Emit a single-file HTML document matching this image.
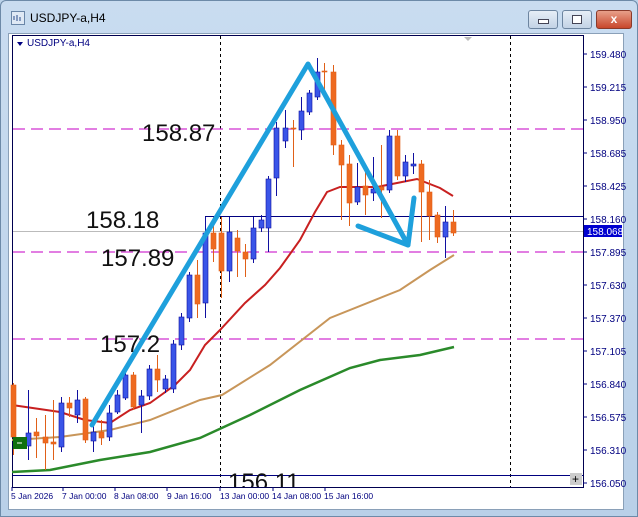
<!DOCTYPE html>
<html><head><meta charset="utf-8"><style>
body{margin:0;width:638px;height:517px;overflow:hidden;background:#bcd3ea;font-family:"Liberation Sans",sans-serif}
.frame{position:absolute;left:0;top:0;width:636px;height:515px;border:1px solid #6d8aa8;background:linear-gradient(#c9dcf0,#b9d0e8);border-radius:6px 6px 0 0}
.title{position:absolute;left:30px;top:11px;font-size:12px;color:#000}
.btn{position:absolute;top:10px;height:17px;border:1px solid #6d85a0;border-radius:3px;background:linear-gradient(#e6eef7,#c3d3e6)}
.inner{position:absolute;left:8px;top:33px;width:614px;height:475px;background:#fff;border:1px solid #8aa0b8}
</style></head><body>
<div class="frame"></div>
<svg style="position:absolute;left:11px;top:11px" width="14" height="14"><rect x="0.5" y="0.5" width="13" height="13" fill="#dfe9f5" stroke="#6a86a8"/><path d="M3 5v4M6 4v6M9 6v4" stroke="#2a4a8a"/></svg>
<div class="title">USDJPY-a,H4</div>
<div class="btn" style="left:528px;width:28px"><div style="position:absolute;left:9px;top:8px;width:9px;height:3px;border:1px solid #445;background:#fff"></div></div>
<div class="btn" style="left:562px;width:28px"><div style="position:absolute;left:9px;top:4px;width:8px;height:7px;border:1px solid #445;background:#fff"></div></div>
<div class="btn" style="left:596px;width:34px;background:linear-gradient(#e8a08a,#c8472c);border-color:#8a3a2a;color:#fff;font-weight:bold;font-size:12px;text-align:center;line-height:17px">x</div>
<div class="inner"></div>
<svg style="position:absolute;left:0;top:0" width="638" height="517" font-family="Liberation Sans, sans-serif">
<rect x="12.5" y="35.5" width="571" height="452" fill="none" stroke="#000050"/>
<g stroke="#000" stroke-dasharray="3,3"><line x1="220.5" y1="36" x2="220.5" y2="487"/><line x1="510.5" y1="36" x2="510.5" y2="487"/></g>
<path d="M464 37l4 4l4-4z" fill="#bbb"/>
<g stroke="#d030d0" stroke-width="1.3" stroke-dasharray="12,6"><line x1="13" y1="129" x2="583" y2="129"/><line x1="13" y1="252" x2="583" y2="252"/><line x1="13" y1="339" x2="583" y2="339"/></g>
<line x1="13" y1="231.5" x2="583" y2="231.5" stroke="#bbb"/>
<path d="M205.5 232V216.5H583" fill="none" stroke="#000080"/>
<line x1="13" y1="475.5" x2="583" y2="475.5" stroke="#000080"/>
<polyline fill="none" stroke="#2a8a2a" stroke-width="2.5" points="12,472 50,470 100,460 150,452 200,438 250,415 300,390 350,368 380,360 420,355 454,347"/>
<polyline fill="none" stroke="#c8965a" stroke-width="2" points="12,440 60,437 110,430 150,420 200,400 222,395 270,365 330,318 400,290 430,270 454,255"/>
<polyline fill="none" stroke="#c82020" stroke-width="2" points="12,405 60,412 85,420 110,423 130,410 150,403 175,385 190,370 205,345 220,330 245,303 265,285 280,268 300,240 315,212 327,192 340,187 377,187 417,179 440,188 453,196"/>
<g id="c"></g>
<rect x="13" y="437" width="14" height="12" fill="#107010"/><line x1="17" y1="443" x2="22" y2="443" stroke="#fff"/>
<g stroke="#1ea0dc" stroke-width="5" fill="none" stroke-linecap="round" stroke-linejoin="round"><polyline points="92,425 308,64 408,245 414,198"/><line x1="358" y1="226" x2="408" y2="245"/></g>
<g font-size="24" fill="#111"><text x="142" y="141">158.87</text><text x="86" y="228">158.18</text><text x="101" y="266">157.89</text><text x="100" y="352">157.2</text></g>
<svg x="0" y="0" width="583" height="487"><text x="228" y="490" font-size="24" fill="#111">156.11</text></svg>
<rect x="570" y="473" width="12" height="12" fill="#ccc"/><text x="572" y="483" font-size="12">+</text>
<g font-size="10" fill="#000080"><text x="590" y="58">159.480</text><text x="590" y="91">159.215</text><text x="590" y="124">158.950</text><text x="590" y="157">158.685</text><text x="590" y="190">158.425</text><text x="590" y="223">158.160</text><text x="590" y="256">157.895</text><text x="590" y="289">157.630</text><text x="590" y="322">157.370</text><text x="590" y="355">157.105</text><text x="590" y="388">156.840</text><text x="590" y="421">156.575</text><text x="590" y="454">156.310</text><text x="590" y="487">156.050</text></g>
<rect x="584" y="225" width="38" height="12" fill="#0000d0"/><text x="587" y="235" font-size="10" fill="#fff">158.068</text>
<g stroke="#000080"><path d="M583 54h4M583 87h4M583 120h4M583 153h4M583 186h4M583 219h4M583 252h4M583 285h4M583 318h4M583 351h4M583 384h4M583 417h4M583 450h4M583 483h4M12 487v4M63 487v4M115 487v4M167 487v4M220 487v4M273 487v4M325 487v4"/></g>
<g font-size="8.5" fill="#000080"><text x="11" y="499">5 Jan 2026</text><text x="62" y="499">7 Jan 00:00</text><text x="114" y="499">8 Jan 08:00</text><text x="167" y="499">9 Jan 16:00</text><text x="220" y="499">13 Jan 00:00</text><text x="272" y="499">14 Jan 08:00</text><text x="324" y="499">15 Jan 16:00</text></g>
<path d="M17 42l3 4l3-4z" fill="#000080"/><text x="27" y="46" font-size="10" fill="#000080">USDJPY-a,H4</text>
</svg>
<script>
var d=[[13,385,437,383,455,0],[28,446,433,390,460,1],[36,432,436,418,458,0],[45,437,443,415,470,0],[53,442,444,400,460,0],[61,447,403,397,452,1],[69,403,408,397,417,0],[77,415,400,390,423,1],[85,399,440,397,443,0],[93,441,432,420,452,1],[101,432,438,420,445,0],[109,437,413,405,441,1],[117,412,395,390,414,1],[125,398,375,370,400,1],[133,375,407,372,410,0],[141,405,396,390,433,1],[149,396,369,365,400,1],[157,369,380,355,392,0],[165,389,379,375,393,1],[173,389,344,340,393,1],[181,345,317,313,350,1],[189,318,275,272,322,1],[197,275,304,260,318,0],[205,303,233,217,318,1],[213,233,249,217,262,0],[221,233,271,217,298,0],[229,271,232,217,282,1],[237,238,251,230,277,0],[245,252,259,244,277,0],[253,259,228,217,263,1],[261,228,220,215,232,1],[268,228,179,176,252,1],[276,178,128,122,196,1],[285,141,128,110,148,1],[293,128,129,120,167,0],[301,130,111,97,140,1],[309,112,93,90,115,1],[317,97,72,58,100,1],[324,71,72,63,90,0],[333,72,145,65,155,0],[341,145,165,140,220,0],[349,164,203,155,226,0],[357,202,187,163,205,1],[365,186,195,165,215,0],[373,193,189,157,201,1],[381,187,190,145,218,0],[389,190,136,130,193,1],[397,136,176,130,180,0],[405,176,162,155,182,1],[413,166,164,153,174,1],[421,164,192,160,242,0],[429,192,216,180,240,0],[437,215,237,212,243,0],[445,237,222,206,258,1],[453,222,233,210,236,0]];
var s='';d.forEach(function(c){var col=c[5]?'#1010a0':'#e06018',fill=c[5]?'#3a55e8':'#ee6a20';var t=Math.min(c[1],c[2]),h=Math.max(1,Math.abs(c[1]-c[2]));s+='<line x1="'+(c[0]+.5)+'" y1="'+c[3]+'" x2="'+(c[0]+.5)+'" y2="'+c[4]+'" stroke="'+col+'"/><rect x="'+(c[0]-2)+'" y="'+t+'" width="5" height="'+h+'" fill="'+fill+'" stroke="'+col+'" stroke-width="0.6"/>';});
document.getElementById('c').innerHTML=s;
</script>
</body></html>
